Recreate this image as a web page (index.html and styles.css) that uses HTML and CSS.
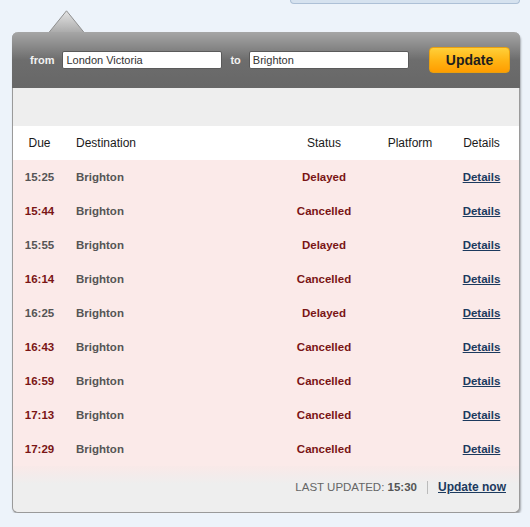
FILE: index.html
```html
<!DOCTYPE html>
<html lang="en">
<head>
  <meta charset="UTF-8">
  <meta name="viewport" content="width=device-width, initial-scale=1.0">
  <link rel="stylesheet" href="styles.css">
</head>
<body>
  <div class="top-box"></div>

  <div class="widget">
    <svg class="tab" width="37" height="23" viewBox="0 0 37 23">
      <defs>
        <linearGradient id="tabFill" x1="0" y1="0" x2="0" y2="1">
          <stop offset="0" stop-color="#e4e4e4"/>
          <stop offset="1" stop-color="#a9a9a9"/>
        </linearGradient>
      </defs>
      <path d="M0.5 23 L18.5 0.8 L36.5 23 Z" fill="url(#tabFill)" stroke="#8e8e8e" stroke-width="1"/>
    </svg>

    <form class="search">
      <label class="search-label">from</label>
      <input class="search-input" type="text" value="London Victoria">
      <label class="search-label to">to</label>
      <input class="search-input" type="text" value="Brighton">
      <button type="button" class="update-btn">Update</button>
    </form>

    <div class="band"></div>

    <table class="board">
      <colgroup>
        <col class="c-due"><col class="c-dest"><col class="c-status"><col class="c-platform"><col class="c-details">
      </colgroup>
      <thead>
        <tr>
          <th class="due">Due</th>
          <th class="dest">Destination</th>
          <th>Status</th>
          <th>Platform</th>
          <th class="details">Details</th>
        </tr>
      </thead>
      <tbody>
        <tr><td class="due">15:25</td><td class="dest">Brighton</td><td class="status">Delayed</td><td></td><td class="details"><a href="#">Details</a></td></tr>
        <tr><td class="due cancelled">15:44</td><td class="dest">Brighton</td><td class="status">Cancelled</td><td></td><td class="details"><a href="#">Details</a></td></tr>
        <tr><td class="due">15:55</td><td class="dest">Brighton</td><td class="status">Delayed</td><td></td><td class="details"><a href="#">Details</a></td></tr>
        <tr><td class="due cancelled">16:14</td><td class="dest">Brighton</td><td class="status">Cancelled</td><td></td><td class="details"><a href="#">Details</a></td></tr>
        <tr><td class="due">16:25</td><td class="dest">Brighton</td><td class="status">Delayed</td><td></td><td class="details"><a href="#">Details</a></td></tr>
        <tr><td class="due cancelled">16:43</td><td class="dest">Brighton</td><td class="status">Cancelled</td><td></td><td class="details"><a href="#">Details</a></td></tr>
        <tr><td class="due cancelled">16:59</td><td class="dest">Brighton</td><td class="status">Cancelled</td><td></td><td class="details"><a href="#">Details</a></td></tr>
        <tr><td class="due cancelled">17:13</td><td class="dest">Brighton</td><td class="status">Cancelled</td><td></td><td class="details"><a href="#">Details</a></td></tr>
        <tr><td class="due cancelled">17:29</td><td class="dest">Brighton</td><td class="status">Cancelled</td><td></td><td class="details"><a href="#">Details</a></td></tr>
      </tbody>
    </table>

    <div class="footer">
      <span class="last-updated">LAST UPDATED: <b>15:30</b></span>
      <span class="sep"></span>
      <a href="#" class="update-now">Update now</a>
    </div>
  </div>
</body>
</html>
```

FILE: styles.css
```css
body {
  margin: 0;
  font-family: 'Liberation Sans', Arial, sans-serif;
  background: #edf3fa;
}

.top-box {
  margin-left: 290px;
  width: 228px;
  height: 3px;
  background: #d6e2ef;
  border: 1px solid #adc0d6;
  border-top: none;
  border-radius: 0 0 4px 4px;
}

.widget {
  position: relative;
  width: 508px;
  margin: 28px 0 0 12px;
  box-sizing: border-box;
  border: 1px solid #9a9a9a;
  border-top: none;
  border-radius: 6px;
  box-shadow: 1px 2px 2px rgba(0, 0, 0, 0.3);
  background: #eeeeee;
}

.tab {
  position: absolute;
  top: -22px;
  left: 35px;
}

.search {
  height: 56px;
  margin: 0 -1px;
  display: flex;
  align-items: center;
  padding: 0 10px 0 18px;
  border-radius: 6px 6px 0 0;
  background: linear-gradient(to bottom, #a6a6a6 0, #8a8a8a 25%, #6d6d6d 50%, #676767 100%);
  position: relative;
}

.search-label {
  font-size: 11px;
  font-weight: bold;
  color: #f2f2f2;
  margin-right: 8px;
}

.search-label.to {
  margin-left: 8px;
}

.search-input {
  width: 160px;
  height: 18px;
  box-sizing: border-box;
  border: 1px solid #5a5a5a;
  border-radius: 2px;
  padding: 0 3px;
  font-family: 'Liberation Sans', Arial, sans-serif;
  font-size: 11px;
  color: #333;
  background: #fff;
}

.update-btn {
  margin-left: auto;
  width: 81px;
  height: 26px;
  border: 1px solid #e8a010;
  border-radius: 4px;
  background: linear-gradient(to bottom, #ffd03a 0, #ffb515 50%, #ff9d00 100%);
  font-family: 'Liberation Sans', Arial, sans-serif;
  font-size: 14px;
  font-weight: bold;
  color: #1e1e1e;
  cursor: pointer;
}

.band {
  height: 38px;
  background: #eeeeee;
}

.board {
  width: 100%;
  border-collapse: collapse;
  table-layout: fixed;
}

.c-due { width: 53px; }
.c-dest { width: 218px; }
.c-status { width: 80px; }
.c-platform { width: 92px; }
.c-details { width: 63px; }

.board th {
  height: 34px;
  padding: 0;
  background: #fff;
  font-size: 12px;
  font-weight: normal;
  color: #1a1a1a;
  text-align: center;
}

.board td {
  height: 34px;
  padding: 0;
  background: #fbeae9;
  font-size: 11.5px;
  font-weight: bold;
  color: #555;
  text-align: center;
}

.board .dest {
  text-align: left;
  padding-left: 10px;
}

.board .details {
  padding-right: 12px;
}

.board .due.cancelled,
.board .status {
  color: #7a1515;
}

.board a {
  color: #1c3a5e;
  text-decoration: underline;
}

.footer {
  height: 46px;
  display: flex;
  align-items: center;
  justify-content: flex-end;
  padding: 0 13px 4px 0;
  box-sizing: border-box;
  border-radius: 0 0 6px 6px;
  background: linear-gradient(to bottom, #f9e9e8 0, #eeeeee 18px);
}

.last-updated {
  font-size: 11.5px;
  color: #666;
}

.last-updated b {
  color: #555;
}

.sep {
  width: 1px;
  height: 13px;
  background: #bbb;
  margin: 0 10px;
}

.update-now {
  font-size: 12px;
  font-weight: bold;
  color: #1c3a5e;
}
```
